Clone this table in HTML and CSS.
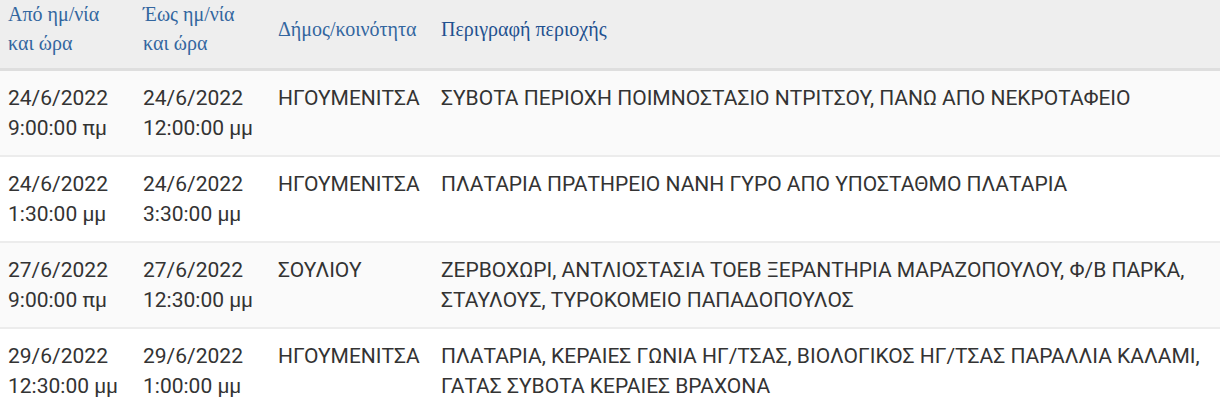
FILE: index.html
```html
<!DOCTYPE html>
<html lang="el">
<head>
<meta charset="utf-8">
<link rel="stylesheet" href="styles.css">
</head>
<body>
<table class="outages">
  <colgroup>
    <col class="c-from">
    <col class="c-to">
    <col class="c-muni">
    <col class="c-desc">
  </colgroup>
  <thead>
    <tr>
      <th>Από ημ/νία<br>και ώρα</th>
      <th>Έως ημ/νία<br>και ώρα</th>
      <th>Δήμος/κοινότητα</th>
      <th class="sorted">Περιγραφή περιοχής</th>
    </tr>
  </thead>
  <tbody>
    <tr class="odd">
      <td>24/6/2022<br>9:00:00 πμ</td>
      <td>24/6/2022<br>12:00:00 μμ</td>
      <td>ΗΓΟΥΜΕΝΙΤΣΑ</td>
      <td>ΣΥΒΟΤΑ ΠΕΡΙΟΧΗ ΠΟΙΜΝΟΣΤΑΣΙΟ ΝΤΡΙΤΣΟΥ, ΠΑΝΩ ΑΠΟ ΝΕΚΡΟΤΑΦΕΙΟ</td>
    </tr>
    <tr>
      <td>24/6/2022<br>1:30:00 μμ</td>
      <td>24/6/2022<br>3:30:00 μμ</td>
      <td>ΗΓΟΥΜΕΝΙΤΣΑ</td>
      <td>ΠΛΑΤΑΡΙΑ ΠΡΑΤΗΡΕΙΟ ΝΑΝΗ ΓΥΡΟ ΑΠΟ ΥΠΟΣΤΑΘΜΟ ΠΛΑΤΑΡΙΑ</td>
    </tr>
    <tr class="odd">
      <td>27/6/2022<br>9:00:00 πμ</td>
      <td>27/6/2022<br>12:30:00 μμ</td>
      <td>ΣΟΥΛΙΟΥ</td>
      <td>ΖΕΡΒΟΧΩΡΙ, ΑΝΤΛΙΟΣΤΑΣΙΑ ΤΟΕΒ ΞΕΡΑΝΤΗΡΙΑ ΜΑΡΑΖΟΠΟΥΛΟΥ, Φ/Β ΠΑΡΚΑ, ΣΤΑΥΛΟΥΣ, ΤΥΡΟΚΟΜΕΙΟ ΠΑΠΑΔΟΠΟΥΛΟΣ</td>
    </tr>
    <tr>
      <td>29/6/2022<br>12:30:00 μμ</td>
      <td>29/6/2022<br>1:00:00 μμ</td>
      <td>ΗΓΟΥΜΕΝΙΤΣΑ</td>
      <td>ΠΛΑΤΑΡΙΑ, ΚΕΡΑΙΕΣ ΓΩΝΙΑ ΗΓ/ΤΣΑΣ, ΒΙΟΛΟΓΙΚΟΣ ΗΓ/ΤΣΑΣ ΠΑΡΑΛΛΙΑ ΚΑΛΑΜΙ, ΓΑΤΑΣ ΣΥΒΟΤΑ ΚΕΡΑΙΕΣ ΒΡΑΧΟΝΑ</td>
    </tr>
  </tbody>
</table>
</body>
</html>
```

FILE: styles.css
```css
html, body {
  margin: 0;
  padding: 0;
  background: #ffffff;
}
.outages {
  width: 1220px;
  border-collapse: collapse;
  table-layout: fixed;
}
.c-from { width: 135px; }
.c-to { width: 135px; }
.c-muni { width: 163px; }
.outages th {
  background: #eeeeee;
  color: #33669f;
  font-family: "Liberation Serif", "DejaVu Serif", serif;
  font-weight: normal;
  font-size: 20px;
  line-height: 29px;
  text-align: left;
  vertical-align: middle;
  padding: 0 8px 10px 8px;
  border-bottom: 3px solid #dedede;
}
.outages th.sorted {
  color: #1f5190;
}
.outages td {
  font-family: Roboto, "Noto Sans", sans-serif;
  font-size: 21px;
  line-height: 30px;
  color: #333333;
  vertical-align: top;
  padding: 12px 8px 12px 8px;
  border-bottom: 2px solid #ececec;
}
.outages tr.odd td {
  background: #fafafa;
}
```
